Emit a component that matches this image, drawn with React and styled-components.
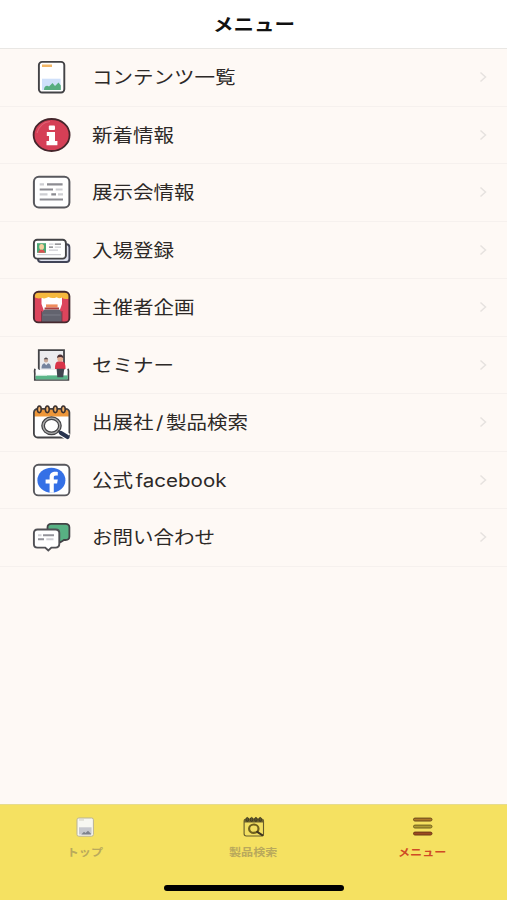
import styled, { createGlobalStyle } from "styled-components";

const ink = "#434346";

const menuItems = [
  { label: "コンテンツ一覧", Icon: ContentsIcon },
  { label: "新着情報", Icon: InfoIcon },
  { label: "展示会情報", Icon: ListIcon },
  { label: "入場登録", Icon: CardIcon },
  { label: "主催者企画", Icon: StageIcon },
  { label: "セミナー", Icon: SeminarIcon },
  { label: "出展社/製品検索", Icon: CalendarIcon },
  { label: "公式facebook", Icon: FacebookIcon },
  { label: "お問い合わせ", Icon: ChatIcon },
];

const tabs = [
  { label: "トップ", Icon: TopTabIcon },
  { label: "製品検索", Icon: SearchTabIcon },
  { label: "メニュー", Icon: MenuTabIcon, active: true },
];

export default function App() {
  return (
    <Screen>
      <GlobalStyle />
      <Header>
        <Title>メニュー</Title>
      </Header>
      <MenuList>
        {menuItems.map(({ label, Icon }) => (
          <MenuRow key={label}>
            <Icon />
            <RowLabel>{spaceLatin(label)}</RowLabel>
            <Chevron viewBox="0 0 8 12">
              <path d="M1.5 1.5L6.5 6L1.5 10.5" />
            </Chevron>
          </MenuRow>
        ))}
      </MenuList>
      <Footer>
        <TabBar>
          {tabs.map(({ label, Icon, active }) => (
            <Tab key={label}>
              <Icon />
              <TabLabel $active={active}>{label}</TabLabel>
            </Tab>
          ))}
        </TabBar>
        <HomeIndicator />
      </Footer>
    </Screen>
  );
}

// latin parts get a little room between the kanji
function spaceLatin(label) {
  return label
    .split(/([a-z/]+)/)
    .map((part, index) => (index % 2 ? <Latin key={index}>{part}</Latin> : part));
}

function ContentsIcon() {
  return (
    <RowIcon viewBox="0 0 40 36">
      <rect x="6.9" y="2.9" width="25.4" height="30.6" rx="3.2" fill="#fff" stroke={ink} strokeWidth="1.9" />
      <rect x="10" y="5.5" width="10" height="2.5" fill="#f3b767" />
      <rect x="10" y="19.7" width="18.6" height="11.3" fill="#cfe0fa" />
      <path d="M12 31C12 27 15 26 17 27.5L20.5 24L23 27L26.5 23.5L28.8 26.5V31Z" fill="#57ad80" />
    </RowIcon>
  );
}

function InfoIcon() {
  return (
    <RowIcon viewBox="0 0 40 36">
      <ellipse cx="19.6" cy="18" rx="18" ry="16" fill="#d53f56" stroke="#45252b" strokeWidth="1.8" />
      <path d="M5 16C7 9 12 5 18 4.5" fill="none" stroke="#e06374" strokeWidth="1.2" />
      <rect x="16.8" y="8.5" width="6.2" height="4.6" rx="1" fill="#fff" />
      <path d="M14.8 15H23V24H25.4V28.2H14.5V24H17V18.9H14.8Z" fill="#fff" />
    </RowIcon>
  );
}

function ListIcon() {
  return (
    <RowIcon viewBox="0 0 40 36">
      <rect x="1.9" y="2.8" width="35.5" height="30.6" rx="5" fill="#fff" stroke="#58585d" strokeWidth="2" />
      <path d="M15 10.4H30.6M7.7 15.5H21M19.3 20.4H24M7.7 25.5H31" stroke="#8c8c92" strokeWidth="2.2" />
      <path d="M7.7 10.4H12M23.7 15.5H30.6M7.7 20.4H15.5M26 20.4H31" stroke="#cdced2" strokeWidth="2.1" />
    </RowIcon>
  );
}

function CardIcon() {
  return (
    <RowIcon viewBox="0 0 40 36">
      <rect x="6" y="12.2" width="31.4" height="17.8" rx="3" fill="#dfe2ef" stroke="#414457" strokeWidth="1.9" />
      <rect x="1.9" y="7.8" width="32" height="18.8" rx="3.2" fill="#fff" stroke={ink} strokeWidth="1.9" />
      <rect x="5" y="11.2" width="9" height="9.6" fill="#4ca875" />
      <ellipse cx="9.6" cy="14.9" rx="2.4" ry="2.8" fill="#f4d0a0" />
      <path d="M6.3 20.8C6.3 16.8 13 16.8 13 20.8Z" fill="#dc5050" />
      <path d="M22.8 12.2H29M17 15.2H21" stroke="#75757b" strokeWidth="1.3" />
      <path d="M17 12.2H21.5M22.8 15.2H29M17 18.2H26M5 22.7H29" stroke="#ceced3" strokeWidth="1.2" />
    </RowIcon>
  );
}

function StageIcon() {
  return (
    <RowIcon viewBox="0 0 40 36">
      <rect x="1.9" y="2.8" width="35.5" height="30.6" rx="4.5" fill="#dc455c" />
      <path d="M9.5 8H30V15L27.5 22H12L9.5 15Z" fill="#fff" />
      <path d="M9.5 24L12.5 20.5H27.5L30 24V33H9.5Z" fill="#62636e" />
      <path d="M2 8V6Q2 3 6 3H33Q37.4 3 37.4 7V9.5Q32 11 30 8.5Q27 10 24.8 8.2Q20 10 16.5 8Q12 10.5 10 8.8Q6 10.5 2 8Z" fill="#f6b83e" />
      <path d="M9.5 22V33M30 22V33" stroke="#7d3042" strokeWidth=".8" />
      <path d="M14 15.4H25.6V18.5H14Z" fill="#ef8c5d" />
      <path d="M12.6 18.5H27V20.4H12.6Z" fill="#ab4142" />
      <path d="M11 26H28.5" stroke="#7b7c86" strokeWidth="1" />
      <rect x="1.9" y="2.8" width="35.5" height="30.6" rx="4.5" fill="none" stroke="#45292f" strokeWidth="1.9" />
    </RowIcon>
  );
}

function SeminarIcon() {
  return (
    <RowIcon viewBox="0 0 40 36">
      <path d="M6.8 24V3.2H32V24" fill="#ececef" stroke={ink} strokeWidth="1.8" />
      <ellipse cx="14" cy="13" rx="2.2" ry="2.5" fill="#c8a797" />
      <path d="M11.8 12.3Q14 8.5 16.2 12.3Z" fill="#4f4f58" />
      <path d="M9.5 21.5Q9.5 16.5 12.5 16.2L14.2 18.2L16 16.2Q19 16.7 19 21.5Z" fill="#75839e" />
      <path d="M2.8 33V26.5Q2.2 24.5 3 21.8Q6.2 21 7 23H32Q33 21 36 21.8Q37 24.5 36.4 27V33Z" fill="#fff" />
      <path d="M3 21.8Q2.2 24.5 2.8 26.5V33H36.4V27Q37 24.5 36 21.8" fill="none" stroke={ink} strokeWidth="1.7" />
      <rect x="3.7" y="28.4" width="32" height="4" fill="#5bb68a" />
      <path d="M3.6 28.2H15" stroke="#dff1e7" strokeWidth="1" />
      <ellipse cx="28.2" cy="11.4" rx="2.9" ry="3.2" fill="#e5ac8e" />
      <path d="M25 11Q25.3 7.3 28.3 7.5Q31.3 7.6 31.4 11.2Q28.5 8.8 25 11Z" fill="#4b3034" />
      <path d="M23 22Q22.8 15 26 14.6H30.2Q33.8 15 33.5 22Z" fill="#d93449" />
      <path d="M24.6 21.8H32.2L31.2 30.3H25.3Z" fill="#414650" />
    </RowIcon>
  );
}

function CalendarIcon() {
  return (
    <RowIcon viewBox="0 0 40 36">
      <rect x="1.9" y="4.8" width="35.5" height="28.7" rx="3.8" fill="#fff" />
      <path d="M2 12.4V8.5Q2 4.8 6 4.8H33.5Q37.4 4.8 37.4 8.5V12.4Z" fill="#ee973a" />
      <rect x="1.9" y="4.8" width="35.5" height="28.7" rx="3.8" fill="none" stroke={ink} strokeWidth="1.8" />
      {[7.3, 15.3, 23.3, 31.3].map((x) => (
        <ellipse key={x} cx={x} cy="5.3" rx="1.9" ry="3.3" fill="#f5b46b" stroke="#3c3230" strokeWidth="1.6" />
      ))}
      <path d="M26.5 26.5L36 33" stroke="#fff" strokeWidth="7" />
      <ellipse cx="19.5" cy="21.8" rx="8.4" ry="7.6" fill="#fff" stroke={ink} strokeWidth="3.8" />
      <ellipse cx="19.5" cy="21.8" rx="8.4" ry="7.6" fill="none" stroke="#aaa" strokeWidth="1.3" />
      <path d="M25.8 26.8L29.3 29.2" stroke={ink} strokeWidth="2" />
      <path d="M29 29L35.6 33" stroke="#28344f" strokeWidth="4.2" strokeLinecap="round" />
    </RowIcon>
  );
}

function FacebookIcon() {
  return (
    <RowIcon viewBox="0 0 40 36">
      <rect x="1.9" y="2.8" width="35.5" height="30.6" rx="4.5" fill="#fff" stroke="#58585d" strokeWidth="1.9" />
      <ellipse cx="19.4" cy="18.2" rx="14" ry="12.5" fill="#3470e6" />
      <path
        d="M17.6 30.8V21.5H13.6V17.5H17.6V15.2C17.6 11.5 20 9.8 23.3 9.8C24.5 9.8 25.8 10 25.8 10V13.4H24C22.2 13.4 21.8 14.2 21.8 15.4V17.5H25.8L25.1 21.5H21.8V30.8Z"
        fill="#fff"
      />
    </RowIcon>
  );
}

function ChatIcon() {
  return (
    <RowIcon viewBox="0 0 40 36">
      <path
        d="M19.2 4.8H33.5Q37.4 4.8 37.4 8.5V17.5Q37.4 21 33.5 21H32L28.5 23.2L25.5 21H19Q15.5 20.7 15.5 17V8.5Q15.5 4.8 19.2 4.8Z"
        fill="#58b183"
        stroke={ink}
        strokeWidth="1.8"
      />
      <path
        d="M5.5 10.5H23.5Q27.3 10.5 27.3 14V24.8Q27.3 28.6 23.5 28.6H19.4L16.3 31.5L13.2 28.6H5.5Q1.9 28.6 1.9 25V14Q1.9 10.5 5.5 10.5Z"
        fill="#fff"
        stroke="#505055"
        strokeWidth="1.9"
      />
      <path d="M11 16.2H22M6 20.3H12" stroke="#93939a" strokeWidth="1.9" />
      <path d="M6 16.2H9.5M14.3 20.3H21.5" stroke="#d0d0d5" strokeWidth="1.9" />
    </RowIcon>
  );
}

function TopTabIcon() {
  return (
    <TabIcon viewBox="0 0 24 22">
      <rect x="4" y="2" width="16.4" height="18.2" rx="1.8" fill="#f7f7f1" stroke="#b9b396" strokeWidth="1" />
      <rect x="6" y="3.4" width="5" height="1.1" fill="#d4d2c5" />
      <rect x="6" y="11.3" width="12.6" height="7.2" fill="#c6c8ce" />
      <path d="M8.3 18.4L11 15.7L12.5 17L15 14.8L18 17.8V18.4Z" fill="#7e828c" />
    </TabIcon>
  );
}

function SearchTabIcon() {
  return (
    <TabIcon viewBox="0 0 24 22">
      <rect x="2.1" y="3" width="19.4" height="17" rx="2.2" fill="#f2df62" stroke="#655b2b" strokeWidth="1.1" />
      <path d="M2 6.5V4.8Q2 3 4 3H19.7Q21.6 3 21.6 4.8V6.5Z" fill="#6d632e" />
      {[5.3, 9.6, 13.9, 18.2].map((x) => (
        <ellipse key={x} cx={x} cy="3.4" rx="1.3" ry="2" fill="#60592f" stroke="#37331e" strokeWidth=".8" />
      ))}
      <ellipse cx="11.8" cy="12.7" rx="4.7" ry="4.2" fill="none" stroke="#70611e" strokeWidth="2.2" />
      <path d="M15.2 15.8L20.6 19.3" stroke="#403620" strokeWidth="2" strokeLinecap="round" />
    </TabIcon>
  );
}

function MenuTabIcon() {
  return (
    <TabIcon viewBox="0 0 24 22">
      <rect x="2.5" y="2.1" width="18.5" height="2.9" rx="1.45" fill="#ad7728" stroke="#6b491b" />
      <rect x="2.5" y="9.1" width="18.5" height="2.9" rx="1.45" fill="#ae9a33" stroke="#716020" />
      <rect x="2.5" y="16.1" width="18.5" height="2.9" rx="1.45" fill="#9c4a20" stroke="#6f3818" />
    </TabIcon>
  );
}

const GlobalStyle = createGlobalStyle`
  * {
    box-sizing: border-box;
  }

  body {
    margin: 0;
    font-family: Inter, "Noto Sans CJK JP", sans-serif;
    color: #2d2927;
  }
`;

const Screen = styled.div`
  width: 100%;
  height: 900px;
  overflow: hidden;

  display: flex;
  flex-direction: column;

  background-color: #fef9f5;
`;

const Header = styled.header`
  height: 49px;
  padding-top: 1px;
  border-bottom: 1.5px solid #e9e7e4;

  display: flex;
  align-items: center;
  justify-content: center;
  flex-shrink: 0;

  background-color: #fff;
`;

const Title = styled.h1`
  margin: 0;

  color: #111;
  font-size: 18px;
  line-height: 26px;
  font-weight: 700;
  transform: scaleX(1.14);
`;

const MenuList = styled.ul`
  flex: 1;
  margin: 0;
  padding: 0;

  list-style: none;
`;

const MenuRow = styled.li`
  height: 57.5px;
  padding: 0 20px 0 32px;
  border-bottom: 1px solid #f6f1ee;

  display: flex;
  align-items: center;
`;

const RowIcon = styled.svg`
  width: 40px;
  height: 36px;
  margin-right: 20px;
  flex-shrink: 0;
`;

const RowLabel = styled.span`
  flex: 1;
  padding-top: 2px;

  font-size: 18px;
  line-height: 26px;
  white-space: nowrap;
  transform: scaleX(1.14);
  transform-origin: left center;
`;

const Latin = styled.span`
  margin: 0 2.2px;
`;

const Chevron = styled.svg`
  width: 8px;
  height: 12px;

  fill: none;
  stroke: #e6e2df;
  stroke-width: 1.5;
`;

const Footer = styled.footer`
  height: 96px;
  border-top: 1px solid #e6dc8e;

  display: flex;
  flex-direction: column;
  align-items: center;
  flex-shrink: 0;

  background-color: #f5e161;
`;

const TabBar = styled.nav`
  width: 100%;
  height: 80px;

  display: grid;
  grid-template-columns: repeat(3, 1fr);
`;

const Tab = styled.div`
  padding-top: 11px;

  display: flex;
  flex-direction: column;
  align-items: center;
`;

const TabIcon = styled.svg`
  width: 24px;
  height: 22px;
`;

const TabLabel = styled.span`
  margin-top: 7px;

  color: ${({ $active }) => ($active ? "#cf4b25" : "#b9a95c")};
  font-size: 10.6px;
  line-height: 16px;
  font-weight: 700;
  transform: scaleX(1.14);
`;

const HomeIndicator = styled.div`
  width: 180px;
  height: 6px;
  border-radius: 3px;

  background-color: #000;
`;
